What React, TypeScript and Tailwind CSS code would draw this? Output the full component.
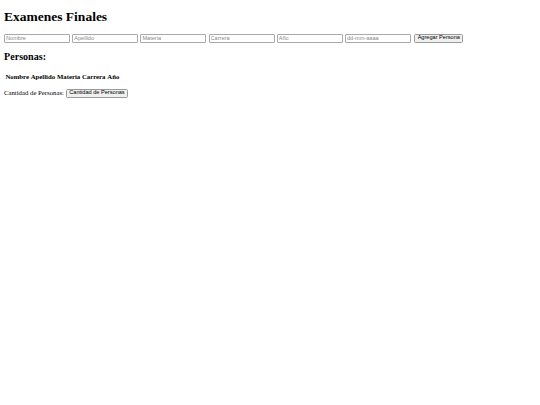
export default function App() {
  const campos = ['Nombre', 'Apellido', 'Materia', 'Carrera', 'Año', 'dd-mm-aaaa'];
  const columnas = ['Nombre', 'Apellido', 'Materia', 'Carrera', 'Año'];

  return (
    <div className="min-h-[405px] bg-white px-[4px] py-px text-[6.75px] text-black font-['Liberation_Serif','Times_New_Roman',serif]">
      <h1 className="mt-[8px] mb-[9px] text-[13.5px] font-bold leading-[15.5px]">Examenes Finales</h1>

      {/* Formulario */}
      <div className="flex items-center gap-[2.2px]">
        {campos.map((c) => (
          <input
            key={c}
            placeholder={c}
            className="h-[9px] w-[66px] rounded-[1px] border border-[#a9a9a9] bg-white px-[1px] text-[5.6px] leading-none text-black placeholder:text-[#8a8a8a] font-['Liberation_Sans',Arial,sans-serif]"
          />
        ))}
        <button className="ml-[1px] h-[9px] rounded-[1.5px] border border-[#9a9a9a] bg-[#efefef] px-[2.5px] text-[5.6px] leading-none text-black font-['Liberation_Sans',Arial,sans-serif]">
          Agregar Persona
        </button>
      </div>

      <h2 className="mt-[8px] mb-[9.5px] text-[10.1px] font-bold leading-[11.6px]">Personas:</h2>

      <table className="border-separate border-spacing-[1.2px]">
        <thead>
          <tr>
            {columnas.map((c) => (
              <th key={c} className="p-[0.42px] text-[6.75px] font-bold leading-[7.8px]">
                {c}
              </th>
            ))}
          </tr>
        </thead>
      </table>

      <div className="mt-[6px] flex items-center gap-[1.8px] leading-[9.6px]">
        <span>Cantidad de Personas:</span>
        <button className="h-[9px] rounded-[1.5px] border border-[#9a9a9a] bg-[#efefef] px-[2.5px] text-[5.6px] leading-none text-black font-['Liberation_Sans',Arial,sans-serif]">
          Cantidad de Personas
        </button>
      </div>
    </div>
  );
}
